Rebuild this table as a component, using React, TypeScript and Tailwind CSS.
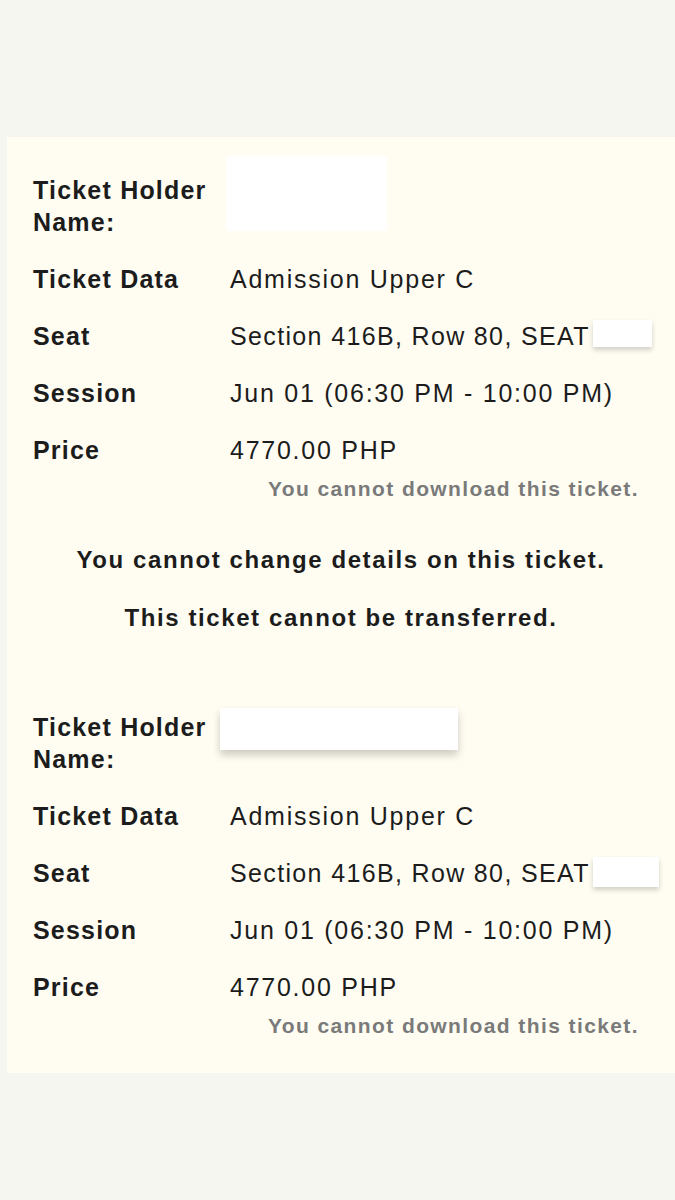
const font = { fontFamily: '"Liberation Sans", Arial, sans-serif' };

interface TicketProps {
  nameBox: string;
  seatBox: string;
}

const Ticket = ({ nameBox, seatBox }: TicketProps) => {
  const label = 'font-bold text-[25px] leading-[32px] tracking-[1.2px] text-[#1c1c1c]';
  const value = 'text-[25px] leading-[32px] tracking-[1.75px] text-[#1c1c1c]';

  return (
    <div>
      <div className="grid grid-cols-[197px_1fr] gap-y-[25px]">
        <div className={label}>
          Ticket Holder
          <br />
          Name:
        </div>
        <div>
          <div className={nameBox} />
        </div>

        <div className={label}>Ticket Data</div>
        <div className={value}>Admission Upper C</div>

        <div className={label}>Seat</div>
        <div className="whitespace-nowrap text-[25px] leading-[32px] tracking-[1.35px] text-[#1c1c1c]">
          Section 416B, Row 80, SEAT
          <span className={seatBox} />
        </div>

        <div className={label}>Session</div>
        <div className={value + ' whitespace-nowrap'}>Jun 01 (06:30 PM - 10:00 PM)</div>

        <div className={label}>Price</div>
        <div className={value}>4770.00 PHP</div>
      </div>
      <div className="mt-[9px] pr-[36px] text-right font-bold text-[21px] leading-[28px] tracking-[1.4px] text-[#7a7a7a]">
        You cannot download this ticket.
      </div>
    </div>
  );
};

export default function App() {
  return (
    <div className="min-h-[1200px] w-full bg-[#f6f6f0] pt-[137px]" style={font}>
      <div className="ml-[7px] bg-[#fffdf2] pl-[26px] pt-[37px] pb-[33px]">
        {/* первый билет */}
        <Ticket
          nameBox="-ml-[3px] -mt-[17px] h-[73px] w-[159px] bg-white shadow-[0_0_6px_rgba(255,255,255,0.9)]"
          seatBox="ml-[3px] inline-block h-[27px] w-[59px] bg-white align-top shadow-[0_3px_5px_rgba(0,0,0,0.18)]"
        />

        {/* ограничения */}
        <div className="-ml-[26px] mt-[41px] text-center font-bold text-[24px] leading-[32px] tracking-[1.6px] text-[#1c1c1c]">
          You cannot change details on this ticket.
        </div>
        <div className="-ml-[26px] mt-[26px] text-center font-bold text-[24px] leading-[32px] tracking-[1.6px] text-[#1c1c1c]">
          This ticket cannot be transferred.
        </div>

        {/* второй билет */}
        <div className="mt-[77px]">
          <Ticket
            nameBox="-ml-[10px] -mt-[3px] h-[42px] w-[238px] bg-white shadow-[0_5px_8px_rgba(0,0,0,0.2)]"
            seatBox="ml-[3px] inline-block h-[30px] w-[66px] bg-white align-top shadow-[0_3px_5px_rgba(0,0,0,0.18)]"
          />
        </div>
      </div>
    </div>
  );
}
